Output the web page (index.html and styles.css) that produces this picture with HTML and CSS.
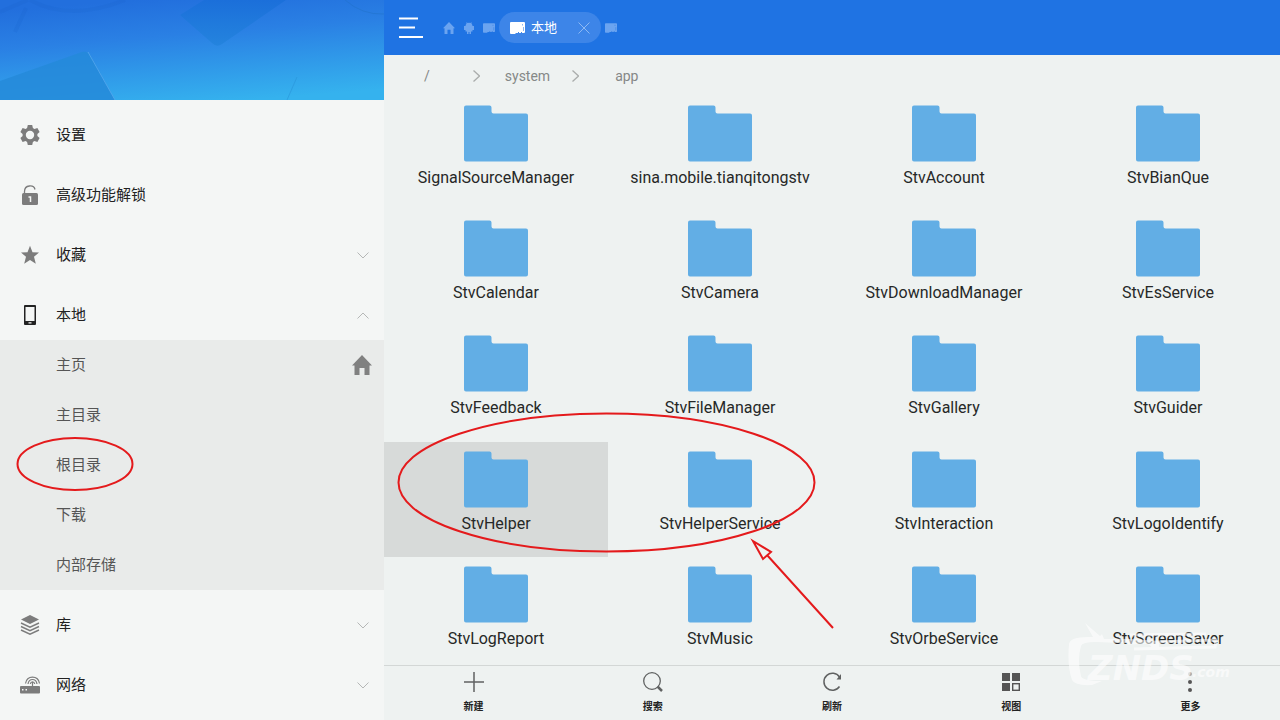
FILE: index.html
```html
<!DOCTYPE html>
<html lang="zh-CN">
<head>
<meta charset="utf-8">
<title>本地 - 文件浏览器</title>
<link rel="stylesheet" href="styles.css">
</head>
<body>
<svg class="defs" aria-hidden="true">
  <symbol id="folder" viewBox="0 0 64 57"><path d="M2 0.500H25.500Q27.500 0.500 27.500 2.500V6.500Q27.500 8.500 29.500 8.500H62Q64 8.500 64 10.500V54.500Q64 56.500 62 56.500H2Q0 56.500 0 54.500V2.500Q0 0.500 2 0.500Z" fill="#62aee5"/></symbol>
  <symbol id="home" viewBox="0 0 20 20"><path d="M10 0L20 10.500H17.500V20H12.500V13H7.500V20H2.500V10.500H0Z" fill="currentColor"/></symbol>
  <symbol id="down" viewBox="0 0 12 7"><path d="M.5 .5L6 6L11.500 .5" fill="none" stroke="currentColor"/></symbol>
  <symbol id="next" viewBox="0 0 7 12"><path d="M.5 .5L6.500 6L.5 11.500" fill="none" stroke="currentColor" stroke-width="1.300"/></symbol>
  <symbol id="card" viewBox="0 0 15 12"><path d="M1 0H14Q15 0 15 1V10Q15 11 14 11H12V10H11V11H9V10H8V11H6L5 12H1Q0 12 0 11V1Q0 0 1 0Z" fill="currentColor"/><path d="M12.500 2V3.500M13.500 5V9" stroke="#1f73e3" opacity=".5"/></symbol>
</svg>
<div class="app">
  <aside class="side">
    <svg class="banner" viewBox="0 0 384 100" preserveAspectRatio="none" aria-hidden="true">
      <defs>
        <linearGradient id="sky" x1="0.35" y1="0" x2="0.65" y2="1"><stop offset="0" stop-color="#226fdd"/><stop offset=".35" stop-color="#2a80e4"/><stop offset="1" stop-color="#35b2ee"/></linearGradient>
        <linearGradient id="card-shade" x1="0" y1="0" x2="0" y2="1"><stop offset="0" stop-color="#1b6fda"/><stop offset="1" stop-color="#2484de"/></linearGradient>
      </defs>
      <rect width="384" height="100" fill="url(#sky)"/>
      <path d="M204 0H286L222 44Q217 48 212 43L180 15Z" fill="url(#card-shade)"/>
      <path d="M0 81L82 52Q88 51 90 55L115 100H0Z" fill="#2489d9" opacity=".85"/>
      <path d="M88 52L115 100" stroke="#56a8ee" fill="none" opacity=".8"/>
      <path d="M30 0Q70 22 125 0M0 12L28 0M15 32L26 8" stroke="#1a62ce" fill="none" opacity=".2" stroke-width="4"/>
      <path d="M345 0Q362 15 384 14" stroke="#2273cc" fill="none" opacity=".6"/>
      <path d="M297 77L287 100" stroke="#2a95d9" fill="none" opacity=".6"/>
    </svg>
    <nav class="menu">
      <button class="item"><svg class="ico" viewBox="0 0 20 20"><path fill="#7c7c7c" fill-rule="evenodd" d="M7.800 0H12.200L12.900 3L14.400 3.900L17.400 3L19.600 6.900L17.400 9V11L19.600 13.100L17.400 17L14.400 16.100L12.900 17L12.200 20H7.800L7.100 17L5.600 16.100L2.600 17L.4 13.100L2.600 11V9L.4 6.900L2.600 3L5.600 3.900L7.100 3ZM10 5.800A4.200 4.200 0 1 0 10 14.200A4.200 4.200 0 1 0 10 5.800Z"/></svg><span>设置</span></button>
      <button class="item"><svg class="ico" viewBox="0 0 20 20"><path d="M4.500 9V6.500C4.500 -.5 14 -.5 15 4.500" fill="none" stroke="#7c7c7c" stroke-width="1.300"/><rect x="2" y="8" width="16" height="12" rx="1.500" fill="#7c7c7c"/><path d="M8.500 12H10.500V17" fill="none" stroke="#f4f6f5" stroke-width="1.500"/></svg><span>高级功能解锁</span></button>
      <button class="item"><svg class="ico" viewBox="0 0 20 20"><path d="M10 .8L12.500 7.200L19 7.500L14 11.800L15.800 18.700L10 15L4.200 18.700L6 11.800L1 7.500L7.500 7.200Z" fill="#7c7c7c"/></svg><span>收藏</span><svg class="chev"><use href="#down"/></svg></button>
      <button class="item" aria-expanded="true"><svg class="ico" viewBox="0 0 20 20"><path fill="#222" fill-rule="evenodd" d="M5 0H15Q16 0 16 1V19Q16 20 15 20H5Q4 20 4 19V1Q4 0 5 0ZM5.500 2V16H14.500V2ZM8.500 17.200V18.600H11.500V17.200Z"/></svg><span>本地</span><svg class="chev up"><use href="#down"/></svg></button>
      <div class="sub">
        <button class="subitem"><span>主页</span><svg class="house"><use href="#home"/></svg></button>
        <button class="subitem">主目录</button>
        <button class="subitem">根目录</button>
        <button class="subitem">下载</button>
        <button class="subitem">内部存储</button>
      </div>
      <button class="item"><svg class="ico" viewBox="0 0 20 20"><path d="M10 0L19 4.500L10 9L1 4.500Z" fill="#7c7c7c"/><path d="M1 8L10 12.200L19 8M1 11.500L10 15.700L19 11.500M1 15L10 19.200L19 15" fill="none" stroke="#7c7c7c" stroke-width="1.400"/></svg><span>库</span><svg class="chev"><use href="#down"/></svg></button>
      <button class="item"><svg class="ico" viewBox="0 0 20 20"><path fill="#7c7c7c" fill-rule="evenodd" d="M1 11H19Q20 11 20 12V17.500Q20 18.500 19 18.500H1Q0 18.500 0 17.500V12Q0 11 1 11ZM2 14V15.500H3.500V14ZM5.500 14V15.500H7V14Z"/><path d="M12.500 11V7M5.500 8.500C7 0 18 0 19.500 8.500M8 9C9 3 16 3 17 9M10.300 9C10.800 6 14.200 6 14.700 9" fill="none" stroke="#7c7c7c" stroke-width="1.200"/></svg><span>网络</span><svg class="chev"><use href="#down"/></svg></button>
    </nav>
    <svg class="mark-root" viewBox="0 0 118 56" aria-hidden="true"><ellipse cx="59" cy="28" rx="57.500" ry="26"/></svg>
  </aside>
  <main class="main">
    <header class="top">
      <button class="burger" aria-label="菜单"><svg viewBox="0 0 24 22"><path d="M0 1.500H19M0 10.500H16M0 20H24" stroke="#fff" stroke-width="2"/></svg></button>
      <div class="tabs">
        <button class="tab" aria-label="主页"><svg class="tico"><use href="#home"/></svg></button>
        <button class="tab" aria-label="应用"><svg class="tico" viewBox="0 0 12 12"><path d="M3.500 0L4.500 1Q6 .5 7.500 1L8.500 0V1.500Q9.500 2.500 9.500 4H11V8H9.500V9.500H8V12H6.500V10H5.500V12H4V9.500H2.500V8H1V4H2.500Q2.500 2.500 3.500 1.500Z" fill="currentColor"/></svg></button>
        <button class="tab" aria-label="本地"><svg class="tcard"><use href="#card"/></svg></button>
        <div class="current"><svg class="ccard"><use href="#card"/></svg><span>本地</span><button class="close" aria-label="关闭"><svg viewBox="0 0 12 12"><path d="M.5 .5L11.500 11.500M11.500 .5L.5 11.500" stroke="#8db9f3"/></svg></button></div>
        <button class="tab" aria-label="本地"><svg class="tcard"><use href="#card"/></svg></button>
      </div>
    </header>
    <nav class="crumbs">
      <a href="#root">/</a><svg><use href="#next"/></svg><a href="#system">system</a><svg><use href="#next"/></svg><a href="#app">app</a>
    </nav>
    <section class="grid">
      <button class="file"><svg><use href="#folder"/></svg>SignalSourceManager</button>
      <button class="file"><svg><use href="#folder"/></svg>sina.mobile.tianqitongstv</button>
      <button class="file"><svg><use href="#folder"/></svg>StvAccount</button>
      <button class="file"><svg><use href="#folder"/></svg>StvBianQue</button>
      <button class="file"><svg><use href="#folder"/></svg>StvCalendar</button>
      <button class="file"><svg><use href="#folder"/></svg>StvCamera</button>
      <button class="file"><svg><use href="#folder"/></svg>StvDownloadManager</button>
      <button class="file"><svg><use href="#folder"/></svg>StvEsService</button>
      <button class="file"><svg><use href="#folder"/></svg>StvFeedback</button>
      <button class="file"><svg><use href="#folder"/></svg>StvFileManager</button>
      <button class="file"><svg><use href="#folder"/></svg>StvGallery</button>
      <button class="file"><svg><use href="#folder"/></svg>StvGuider</button>
      <button class="file selected"><svg><use href="#folder"/></svg>StvHelper</button>
      <button class="file"><svg><use href="#folder"/></svg>StvHelperService</button>
      <button class="file"><svg><use href="#folder"/></svg>StvInteraction</button>
      <button class="file"><svg><use href="#folder"/></svg>StvLogoIdentify</button>
      <button class="file"><svg><use href="#folder"/></svg>StvLogReport</button>
      <button class="file"><svg><use href="#folder"/></svg>StvMusic</button>
      <button class="file"><svg><use href="#folder"/></svg>StvOrbeService</button>
      <button class="file"><svg><use href="#folder"/></svg>StvScreenSaver</button>
    </section>
    <footer class="tools">
      <button class="tool"><svg viewBox="0 0 20 20"><path d="M10 0V20M0 10H20" stroke="#606262" stroke-width="1.500"/></svg>新建</button>
      <button class="tool"><svg viewBox="0 0 20 20"><circle cx="9" cy="9" r="8.300" fill="none" stroke="#606262" stroke-width="1.300"/><path d="M14.500 14.500L19 19" stroke="#606262" stroke-width="2.500"/></svg>搜索</button>
      <button class="tool"><svg viewBox="0 0 20 20"><path d="M17.500 5A8.500 8.500 0 1 0 17.500 14.500" fill="none" stroke="#606262" stroke-width="1.500"/><path d="M19 2V7.500H14.500Z" fill="#606262"/></svg>刷新</button>
      <button class="tool"><svg viewBox="0 0 20 20"><path d="M1 1H9V9H1ZM11 1H19V9H11ZM1 11H9V19H1Z" fill="#555"/><rect x="11.700" y="11.700" width="6.600" height="6.600" fill="none" stroke="#555" stroke-width="1.400"/></svg>视图</button>
      <button class="tool"><svg viewBox="0 0 20 20"><circle cx="10" cy="2" r="2" fill="#aaa"/><circle cx="10" cy="10" r="2" fill="#555"/><circle cx="10" cy="18" r="2" fill="#555"/></svg>更多</button>
    </footer>
    <svg class="mark-pair" viewBox="0 0 436 216" aria-hidden="true"><ellipse cx="209.500" cy="70.500" rx="208" ry="69"/><path d="M436 216L370 143M356 129L374 140L366 147Z"/></svg>
    <div class="logo"><svg viewBox="0 0 166 68" aria-hidden="true"><path d="M91 28V20Q70 16 36 17L34 12L38 8L32 14L17 1L25 15Q2 14 1 22Q-1 44 4 58Q7 64 24 63L34 59Q14 59 13 54Q9 38 13 24Q14 20 28 20L78 22Q83 22 85 28Z"/><path d="M62 13L138 12M60 21L148 18L147 25L66 27" fill="none" stroke="currentColor" stroke-width="3"/></svg><b>ZNDS</b><span>.com</span></div>
  </main>
</div>
</body>
</html>
```
FILE: styles.css
```css
* { box-sizing: border-box; }
body { margin: 0; font-family: Roboto, "Noto Sans CJK SC", sans-serif; color: #222; background: #eef2f1; }
button { border: 0; padding: 0; background: none; font: inherit; color: inherit; cursor: pointer; }
svg { display: block; flex: none; }
.defs { position: absolute; width: 0; height: 0; }
.app { display: grid; grid-template-columns: 3fr 7fr; height: 100vh; overflow: hidden; }
.side { position: relative; background: #f4f6f5; overflow: hidden; }
.banner { width: 100%; height: 100px; }
.menu { display: flex; flex-direction: column; }
.item { display: flex; align-items: center; gap: 16px; height: 60px; padding: 10px 15px 0 20px; font-size: 15px; line-height: 20px; }
.ico { width: 20px; height: 20px; }
.chev { width: 12px; height: 7px; margin-left: auto; color: #b5b7b6; }
.up { transform: rotate(180deg); }
.sub { display: flex; flex-direction: column; background: #e9ebea; }
.subitem { display: flex; align-items: center; justify-content: space-between; height: 50px; padding: 0 12px 0 56px; font-size: 15px; line-height: 20px; color: #555; text-align: left; }
.house { width: 20px; height: 20px; color: #808080; }
.main { position: relative; display: flex; flex-direction: column; min-width: 0; min-height: 0; }
.top { display: flex; align-items: center; gap: 20px; flex: none; height: 55px; padding-left: 15px; background: #1f73e3; }
.burger svg { width: 24px; height: 22px; }
.tabs { display: flex; align-items: center; gap: 8px; color: #6ba4f0; }
.tico { width: 12px; height: 12px; }
.tcard { width: 12px; height: 10px; }
.current { display: flex; align-items: center; gap: 6px; height: 31px; margin: 0 -4px; padding: 0 11px; border-radius: 16px; background: #3d85e8; color: #fff; font-size: 13px; line-height: 16px; }
.ccard { width: 15px; height: 12px; }
.close { margin-left: 15px; }
.close svg { width: 12px; height: 12px; }
.crumbs { display: flex; align-items: center; flex: none; height: 41px; padding-left: 40px; font-size: 14px; color: #858887; }
.crumbs a { color: inherit; text-decoration: none; }
.crumbs svg { width: 7px; height: 12px; margin: 0 36px 0 22px; color: #aaadac; }
.crumbs a:first-child + svg { margin: 0 25px 0 43px; }
.grid { flex: 1; min-height: 0; display: grid; grid-template-columns: repeat(4, 1fr); grid-auto-rows: 16vh; overflow: hidden; }
.file { display: flex; flex-direction: column; align-items: center; gap: 6px; padding-top: 9px; font-size: 16px; line-height: 20px; color: #262827; }
.file svg { width: 64px; height: 57px; }
.selected { background: #d7dad9; }
.tools { flex: none; display: grid; grid-template-columns: repeat(5, 1fr); height: 55px; border-top: 1px solid #d3d7d6; }
.tool { display: flex; flex-direction: column; align-items: center; gap: 7px; padding-top: 6px; font-size: 10px; line-height: 16px; font-weight: 700; }
.tool svg { width: 20px; height: 20px; }
.mark-root, .mark-pair { position: absolute; fill: none; stroke: #e41a1c; stroke-width: 2; pointer-events: none; }
.mark-root { left: 16px; top: 436px; width: 118px; height: 56px; }
.mark-pair { left: 13px; top: 412px; width: 436px; height: 216px; overflow: visible; }
.logo { position: absolute; right: 46px; bottom: 30px; width: 166px; height: 68px; color: #fff; opacity: .6; font-family: "DejaVu Sans", sans-serif; font-style: italic; font-weight: 700; pointer-events: none; }
.logo svg { width: 166px; height: 68px; fill: currentColor; }
.logo b { position: absolute; left: 20px; top: 26px; font-size: 34px; line-height: 40px; }
.logo span { position: absolute; left: 124px; top: 38px; font-size: 14px; line-height: 24px; }
```
